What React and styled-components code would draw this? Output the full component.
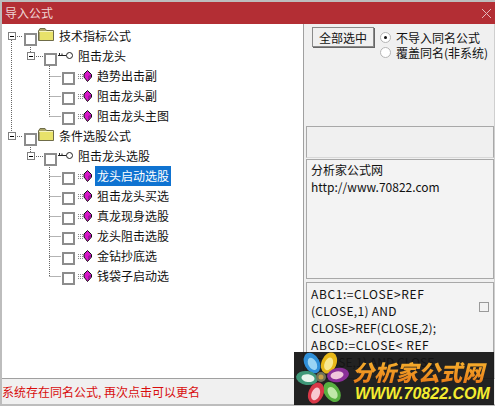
import React from "react";
import styled, { createGlobalStyle } from "styled-components";

const Global = createGlobalStyle`
  html, body { margin: 0; padding: 0; background: #fff; }
  body { width: 504px; height: 410px; overflow: hidden; font-family: "Noto Sans CJK SC", "Liberation Sans", sans-serif; }
`;
const Page = styled.div`position: relative; width: 504px; height: 410px; overflow: hidden;`;
const Win = styled.div`
  width: 495px; height: 406px; box-sizing: border-box; border: 2px solid #bdbdbd; border-right: 0; background: #f0f0f0;
  display: flex; flex-direction: column;
`;
const Title = styled.div`
  height: 22px; flex: none; background: #b32e34; color: #efd6d6; font-size: 12px; line-height: 22px; padding-left: 3px;
  display: flex; justify-content: space-between; align-items: center;
`;
const Body = styled.div`flex: 1; display: flex; min-height: 0;`;
const TreePane = styled.div`
  width: 301px; flex: none; background: #fff; border-bottom: 1px solid #a0a0a0; box-sizing: border-box; padding-top: 2px;
  position: relative;
`;
const Right = styled.div`
  flex: 1; border-left: 1px solid #a0a0a0; border-right: 1px solid #cfcfcf; border-bottom: 1px solid #a0a0a0;
  display: flex; flex-direction: column; padding: 2px 0 0 2px; box-sizing: border-box; min-width: 0;
`;
const Controls = styled.div`display: flex; height: 100px; flex: none; padding-left: 6px; gap: 6px;`;
const SelectAll = styled.button`
  width: 62px; height: 20px; margin-top: 1px; padding: 0; font: 12px "Noto Sans CJK SC", sans-serif; color: #111; background: #f0f0f0;
  border: 1px solid #8a8a8a; box-shadow: 1px 1px 0 #666;
`;
const Radios = styled.div`display: flex; flex-direction: column; padding-top: 4px;`;
const RadioRow = styled.div`display: flex; align-items: center; height: 15px; font-size: 12px; color: #111; gap: 5px; white-space: nowrap;`;
const Radio = styled.span`
  width: 9px; height: 9px; border-radius: 50%; background: #fff; border: 1px solid #b5b5b5; display: flex; align-items: center; justify-content: center;
  &::after { content: ""; width: 3px; height: 3px; border-radius: 50%; background: ${p => (p.$on ? "#111" : "transparent")}; }
`;
const Gray = styled.div`height: 32px; flex: none; border: 1px solid #a8a8a8; border-bottom-color: #d8d8d8; box-sizing: border-box;`;
const InfoBox = styled.div`
  height: 120px; flex: none; border: 1px solid #a8a8a8; background: #f3f3f3; box-sizing: border-box; padding: 1px 4px; margin-top: 1px;
  font-size: 12px; line-height: 17px; color: #111;
`;
const FormulaBox = styled.div`
  flex: 1; margin-top: 3px; border: 1px solid #a8a8a8; border-bottom: 0; background: #f3f3f3; padding: 2px 4px; box-sizing: border-box;
  font: 12px/17px "Noto Sans CJK SC", sans-serif; color: #111; position: relative; overflow: hidden;
`;
const Line = styled.div`white-space: nowrap; letter-spacing: ${p => p.$ls || 0}px;`;
const Check = styled.span`
  position: absolute; right: 4px; top: 19px; width: 8px; height: 8px; border: 1px solid #9a9a9a;
`;
const Status = styled.div`
  height: 25px; flex: none; display: flex; align-items: center; color: #d80d0d; font-size: 12px; background: #f0f0f0;
`;
const Row = styled.div`
  height: 20px; display: flex; align-items: center; padding-left: ${p => p.$x}px; position: relative;
`;
const Box = styled.span`
  width: 9px; height: 9px; border: 2px solid #8c8c8c; background: #fff; flex: none; position: relative; top: ${p => p.$top || 2}px;
`;
const Plus = styled.span`
  width: 6px; height: 6px; border: 1px solid #808080; background: #fff; flex: none; display: flex; align-items: center; justify-content: center;
  margin-right: ${p => p.$gap}px;
  &::after { content: ""; width: 4px; height: 1px; background: #000; }
`;
const Label = styled.span`
  font-size: 12px; line-height: 20px; padding: 0 2px; color: ${p => (p.$sel ? "#fff" : "#111")}; background: ${p => (p.$sel ? "#0f73d1" : "transparent")};
  white-space: nowrap; margin-left: ${p => p.$m || 0}px;
`;
const Guides = styled.svg`position: absolute; left: 0; top: 0; pointer-events: none;`;
const FolderWrap = styled.span`display: flex; margin: -3px 0 0 1px;`;
const KeyWrap = styled.span`display: flex; margin: -2px 0 0 1px;`;
const Watermark = styled.div`
  position: absolute; left: 5px; top: 27px; width: 490px; height: 378px; overflow: hidden; pointer-events: none;
  color: rgba(0, 0, 0, 0.016); font: 24px/80px "DejaVu Sans", "Noto Sans CJK SC", sans-serif; white-space: nowrap;
`;
const Logo = styled.div`
  position: absolute; left: 294px; top: 352px; width: 200px; height: 53px; background: rgba(20, 20, 20, 0.94); overflow: hidden;
`;
const LogoText = styled.div`display: flex; flex-direction: column; padding: 6px 0 0 58px; font-style: italic;`;
const LogoCn = styled.div`
  font-size: 22px; line-height: 26px; font-weight: 900; white-space: nowrap;
  color: #f09a20; background: linear-gradient(#f8b830, #e87a18); -webkit-background-clip: text; background-clip: text; -webkit-text-fill-color: transparent;
`;
const LogoEn = styled.div`font: italic 700 16px/19px "Liberation Sans", sans-serif; color: #f4ec30; margin-left: 3px; white-space: nowrap;`;
const Flower = styled.svg`position: absolute; left: 0; top: 0;`;

const Folder = () => (
  <svg width="16" height="13" viewBox="0 0 16 13" style={{ flex: "none" }}>
    <path d="M0.5 3 L2 0.5 H7 L8.5 2.5 H15.5 V12.5 H0.5 Z" fill="#a8a468" stroke="#6f6c48" />
    <rect x="2" y="4" width="13" height="8" fill="#e8e26a" />
    <path d="M1 3.5 H15" stroke="#f6f3c0" />
  </svg>
);
const KeyIcon = () => (
  <svg width="16" height="9" viewBox="0 0 16 9" style={{ flex: "none" }}>
    <path d="M0 4.5 H8.5 M1.5 4.5 V2 M4 4.5 V2.5" stroke="#222" fill="none" />
    <circle cx="11.5" cy="4.5" r="3" fill="#fff" stroke="#222" />
  </svg>
);
const Gem = () => (
  <svg width="14" height="12" viewBox="0 0 14 12" style={{ flex: "none", marginLeft: 3 }}>
    <path d="M0 4.5 H5 M0 6.5 H5 M0 8.5 H5" stroke="#888" strokeDasharray="1 1" />
    <path d="M9.5 0.5 L13.5 4.5 L13.5 7 L9.5 11.5 L6 7 L6 4 Z" fill="#d818c8" stroke="#111" />
    <path d="M10 6 L13 4.5 V7 L10 10.5 Z" fill="#a012a0" />
  </svg>
);

const tree1 = ["趋势出击副", "阻击龙头副", "阻击龙头主图"];
const tree2 = ["龙头启动选股", "狙击龙头买选", "真龙现身选股", "龙头阻击选股", "金钻抄底选", "钱袋子启动选"];

const Leaf = ({ t, sel }) => (
  <Row $x={60}>
    <Box />
    <Gem />
    <Label $sel={sel} $m={3}>{t}</Label>
  </Row>
);

const Petal = ({ cx, cy, rx, ry, rot, outer, inner }) => (
  <g transform={`rotate(${rot} ${cx} ${cy})`}>
    <ellipse cx={cx} cy={cy} rx={rx} ry={ry} fill={outer} />
    <ellipse cx={cx} cy={cy + 1} rx={rx * 0.55} ry={ry * 0.6} fill={inner} />
  </g>
);

const guides =
  "M9.5 16 V109 M13 12.5 H21 M13 112.5 H21 M28.5 21 V28 M28.5 121 V128 M32 32.5 H41 M32 132.5 H41 " +
  "M47.5 42 V92.5 M47.5 52.5 H59 M47.5 72.5 H59 M47.5 92.5 H59 " +
  "M47.5 139 V252.5 M47.5 152.5 H59 M47.5 172.5 H59 M47.5 192.5 H59 M47.5 212.5 H59 M47.5 232.5 H59 M47.5 252.5 H59";

const markLine = "分析家公式网www.70822.com 分析家公式网";

export default function App() {
  return (
    <Page>
      <Global />
      <Win>
        <Title>
          导入公式
          <svg width="11" height="11" viewBox="0 0 11 11" style={{ marginRight: 3 }}>
            <path d="M1 1 L10 10 M10 1 L1 10" stroke="#e4b8ba" />
          </svg>
        </Title>
        <Body>
          <TreePane>
            <Guides width="300" height="354">
              <path d={guides} stroke="#666" strokeDasharray="1 1" fill="none" />
            </Guides>
            <Row $x={6}>
              <Plus $gap={8} />
              <Box $top={3} />
              <FolderWrap><Folder /></FolderWrap>
              <Label $m={3}>技术指标公式</Label>
            </Row>
            <Row $x={25}>
              <Plus $gap={9} />
              <Box $top={3} />
              <KeyWrap><KeyIcon /></KeyWrap>
              <Label $m={2}>阻击龙头</Label>
            </Row>
            {tree1.map(t => <Leaf key={t} t={t} />)}
            <Row $x={6}>
              <Plus $gap={8} />
              <Box $top={3} />
              <FolderWrap><Folder /></FolderWrap>
              <Label $m={3}>条件选股公式</Label>
            </Row>
            <Row $x={25}>
              <Plus $gap={9} />
              <Box $top={3} />
              <KeyWrap><KeyIcon /></KeyWrap>
              <Label $m={2}>阻击龙头选股</Label>
            </Row>
            {tree2.map((t, i) => <Leaf key={t} t={t} sel={i === 0} />)}
          </TreePane>
          <Right>
            <Controls>
              <SelectAll>全部选中</SelectAll>
              <Radios>
                <RadioRow><Radio $on />不导入同名公式</RadioRow>
                <RadioRow><Radio />覆盖同名(非系统)</RadioRow>
              </Radios>
            </Controls>
            <Gray />
            <InfoBox>
              <Line>分析家公式网</Line>
              <Line>http://www.70822.com</Line>
            </InfoBox>
            <FormulaBox>
              <Line $ls={0.6}>ABC1:=CLOSE&gt;REF</Line>
              <Line $ls={0.3}>(CLOSE,1) AND</Line>
              <Line $ls={0.1}>CLOSE&gt;REF(CLOSE,2);</Line>
              <Line $ls={0.6}>ABCD:=CLOSE&lt; REF</Line>
              <Line $ls={0.1}>(CLOSE,1) AND CLOSE</Line>
              <Check />
            </FormulaBox>
          </Right>
        </Body>
        <Status>系统存在同名公式, 再次点击可以更名</Status>
      </Win>
      <Watermark>
        {[0, 1, 2, 3, 4].map(i => <div key={i}>{markLine}</div>)}
      </Watermark>
      <Logo>
        <Flower width="56" height="53" viewBox="0 0 56 53">
          <Petal cx={18} cy={11} rx={7.5} ry={11} rot={-28} outer="#2f8fd8" inner="#9ad4f4" />
          <Petal cx={35} cy={11} rx={7.5} ry={11} rot={22} outer="#e8b818" inner="#f8e890" />
          <Petal cx={44} cy={23} rx={7} ry={11} rot={80} outer="#8a2f98" inner="#f0c8dc" />
          <Petal cx={38} cy={40} rx={7.5} ry={11} rot={-35} outer="#58b040" inner="#c0e8a8" />
          <Petal cx={22} cy={41} rx={7.5} ry={11} rot={22} outer="#d83848" inner="#f8c8d0" />
          <Petal cx={13} cy={26} rx={7} ry={11} rot={-82} outer="#3f9878" inner="#e8f4ec" />
          <circle cx="27" cy="25" r="5" fill="#6e7258" />
          <circle cx="27" cy="25" r="2.5" fill="#c8a048" />
        </Flower>
        <LogoText>
          <LogoCn>分析家公式网</LogoCn>
          <LogoEn>WWW.70822.COM</LogoEn>
        </LogoText>
      </Logo>
    </Page>
  );
}
